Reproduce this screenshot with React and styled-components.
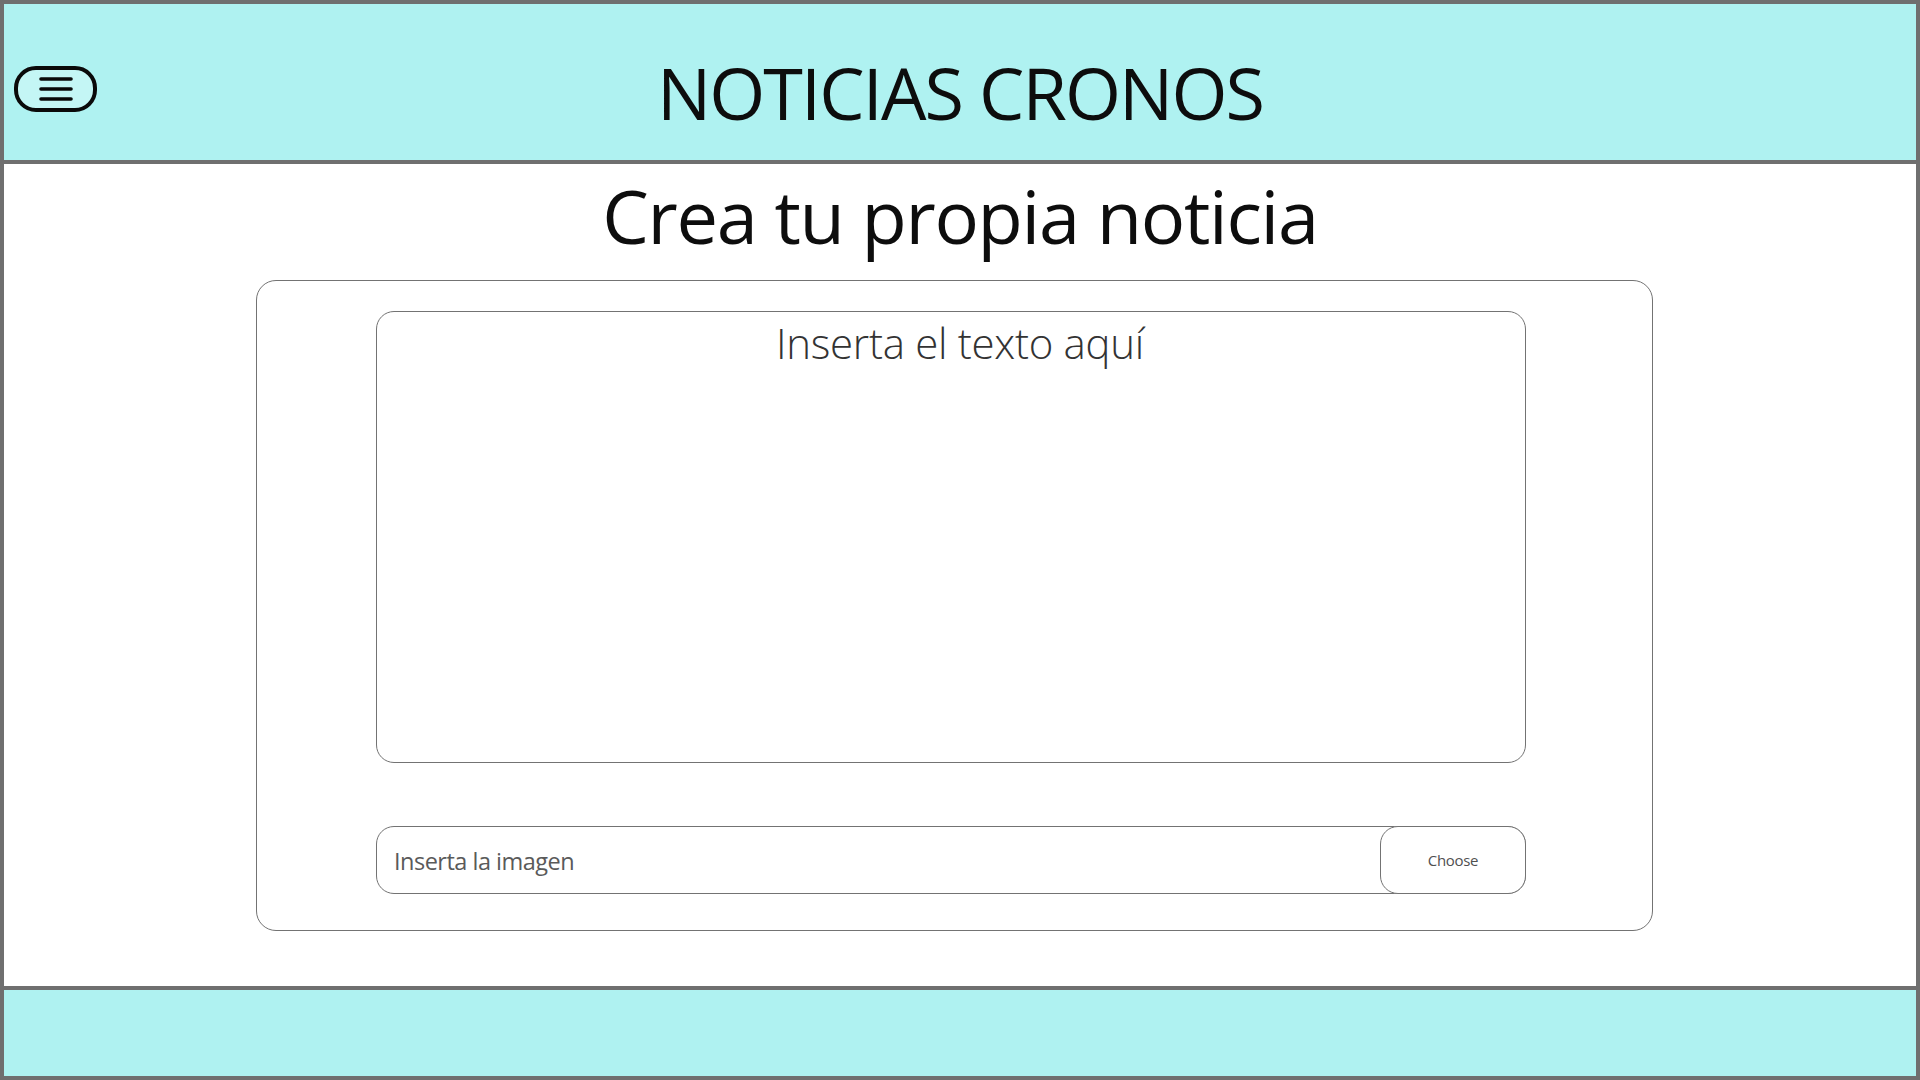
import React from "react";
import styled, { createGlobalStyle } from "styled-components";

const GlobalStyle = createGlobalStyle`
  * { box-sizing: border-box; }
  html, body { margin: 0; padding: 0; background: #ffffff; }
  body { font-family: "Open Sans", "Noto Sans", "Liberation Sans", sans-serif; }
`;

const Frame = styled.div`
  width: 1920px;
  height: 1080px;
  border: 4px solid #6f6f6f;
  display: flex;
  flex-direction: column;
  background: #ffffff;
`;

const Header = styled.header`
  height: 160px;
  flex: none;
  background: #aff2f1;
  border-bottom: 4px solid #6f6f6f;
  display: grid;
  grid-template-columns: 1fr auto 1fr;
  align-items: start;
`;

const MenuButton = styled.button`
  justify-self: start;
  margin: 62px 0 0 10px;
  width: 83px;
  height: 46px;
  border: 4px solid #0a0a0a;
  border-radius: 22px;
  background: #c4f6f5;
  display: flex;
  align-items: center;
  justify-content: center;
  padding: 0;
  cursor: pointer;
`;

const SiteTitle = styled.h1`
  margin: 52px 0 0;
  font-family: "Open Sans", "Noto Sans", sans-serif;
  font-weight: 400;
  font-size: 72px;
  line-height: 1;
  color: #0d0d0d;
  letter-spacing: -1.9px;
  white-space: nowrap;
`;

const Main = styled.main`
  flex: 1;
  display: flex;
  flex-direction: column;
  align-items: center;
`;

const PageHeading = styled.h2`
  margin: 15px 0 0;
  font-family: "Open Sans", "Noto Sans", sans-serif;
  font-weight: 400;
  font-size: 74px;
  line-height: 1;
  color: #0d0d0d;
  letter-spacing: -1.3px;
`;

const Card = styled.section`
  align-self: flex-start;
  margin: 27px 0 0 252px;
  width: 1397px;
  height: 651px;
  border: 1px solid #737373;
  border-radius: 20px;
  padding: 30px 0 0 119px;
  display: flex;
  flex-direction: column;
  gap: 63px;
`;

const TextBox = styled.textarea`
  width: 1150px;
  height: 452px;
  border: 1px solid #737373;
  border-radius: 18px;
  resize: none;
  padding: 10px 20px 8px 38px;
  font-family: "Open Sans", "Noto Sans", sans-serif;
  font-weight: 300;
  font-size: 42px;
  line-height: 1;
  letter-spacing: -0.3px;
  text-align: center;
  color: #333;
  background: #fff;
  outline: none;
  &::placeholder { color: #333333; opacity: 1; }
`;

const FileRow = styled.div`
  width: 1150px;
  height: 68px;
  display: flex;
`;

const FileInput = styled.input`
  flex: 1;
  min-width: 0;
  height: 100%;
  border: 1px solid #737373;
  border-radius: 18px;
  padding: 2px 17px 0;
  font-family: "Open Sans", "Noto Sans", sans-serif;
  font-size: 23.5px;
  letter-spacing: -0.5px;
  color: #555;
  background: #fff;
  outline: none;
  &::placeholder { color: #5a5a5a; opacity: 1; }
`;

const ChooseButton = styled.button`
  position: relative;
  flex: none;
  width: 146px;
  height: 100%;
  margin-left: -146px;
  border: 1px solid #737373;
  border-radius: 18px;
  background: #fff;
  font-family: "Open Sans", "Noto Sans", sans-serif;
  font-size: 15px;
  color: #505050;
  letter-spacing: -0.3px;
  cursor: pointer;
`;

const Footer = styled.footer`
  height: 90px;
  flex: none;
  background: #aff2f1;
  border-top: 4px solid #6f6f6f;
`;

function MenuIcon() {
  return (
    <svg width="36" height="26" viewBox="0 0 36 26" aria-hidden="true">
      <g stroke="#0a0a0a" strokeWidth="3.6" strokeLinecap="round">
        <line x1="3" y1="3" x2="33" y2="3" />
        <line x1="3" y1="13" x2="33" y2="13" />
        <line x1="3" y1="23" x2="33" y2="23" />
      </g>
    </svg>
  );
}

export default function App() {
  return (
    <>
      <GlobalStyle />
      <Frame>
        <Header>
          <MenuButton aria-label="Menú">
            <MenuIcon />
          </MenuButton>
          <SiteTitle>NOTICIAS CRONOS</SiteTitle>
        </Header>
        <Main>
          <PageHeading>Crea tu propia noticia</PageHeading>
          <Card>
            <TextBox placeholder="Inserta el texto aquí" />
            <FileRow>
              <FileInput type="text" placeholder="Inserta la imagen" readOnly />
              <ChooseButton type="button">Choose</ChooseButton>
            </FileRow>
          </Card>
        </Main>
        <Footer />
      </Frame>
    </>
  );
}
